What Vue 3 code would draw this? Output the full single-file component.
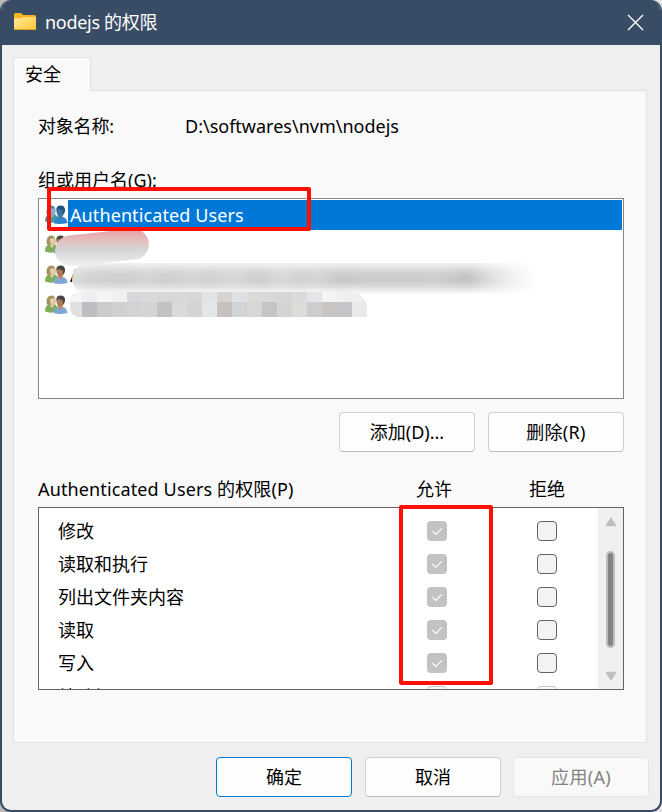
<script setup>
const users = [
  { name: 'Authenticated Users', selected: true },
  { name: '', selected: false },
  { name: 'A', selected: false },
  { name: '', selected: false },
]

const permissions = ['修改', '读取和执行', '列出文件夹内容', '读取', '写入', '特殊权限'].map(
  (label, i) => ({ label, empty: i === 5 }),
)

const mosaic = [
  ['#f4f4f5', '#eeeef2', '#f4f4f6', '#f0f0f0', '#d8d8dc', '#d8d9da', '#d6d7d7', '#d8d8d8', '#d8d7d6', '#e1e4e6', '#d6d3d0', '#dfe1e4', '#dadbd8', '#d7d8d9', '#d5d6d6', '#dadad8', '#e3e5e9', '#f4f4f4', '#efefef', '#eeefef'],
  ['#dfdfdf', '#bdbec2', '#cbcbc9', '#cfd0d2', '#d3d3d3', '#d4d4d2', '#c1c2c2', '#d9dadd', '#d5d4d2', '#e3e7ea', '#c6c1be', '#d1d3d5', '#d6d8d7', '#c4c5c7', '#d3d4d4', '#dddcd8', '#cccdcf', '#c8c5c3', '#c5c6c9', '#e9eaea'],
]
</script>

<template>
  <div class="window">
    <header class="titlebar">
      <svg class="folder" width="22" height="18" viewBox="0 0 22 18">
        <defs>
          <linearGradient id="folderFill" x1="0" y1="0" x2="1" y2="1">
            <stop offset="0" stop-color="#ffe69b" />
            <stop offset="1" stop-color="#ffc937" />
          </linearGradient>
        </defs>
        <path d="M0 1.5Q0 0 1.5 0H6.5Q7.3 0 8 .9L9.2 2H20.5Q22 2 22 3.5V8H0Z" fill="#f8b51c" />
        <path d="M0 5.2H6.5Q7.5 5.2 8.2 4.4L8.8 4H20.7Q22 4 22 5.2V16Q22 17 21 17H1Q0 17 0 16Z" fill="url(#folderFill)" />
        <path d="M.3 16.5H21.7" stroke="#e5a321" />
      </svg>
      <h1>nodejs 的权限</h1>
      <svg class="close" width="17" height="17" viewBox="0 0 17 17">
        <path d="M1 1L16 16M16 1L1 16" stroke="#fff" stroke-width="1.4" />
      </svg>
    </header>

    <main class="body">
      <div class="tab">安全</div>
      <section class="panel">
        <div class="object">
          <span class="object-label">对象名称:</span>
          <span class="path">D:\softwares\nvm\nodejs</span>
        </div>
        <div class="group-label">组或用户名(G):</div>

        <div class="users">
          <div v-for="(user, i) in users" :key="i" class="user" :class="{ selected: user.selected }">
            <svg class="people" width="23" height="22" viewBox="0 0 23 22">
              <path d="M0 17.5Q0 11.5 4 10.5L9 9.5L13 13L10.5 18Q5 19.5 0 17.5Z" :fill="user.selected ? '#429a98' : '#80ad5a'" />
              <path d="M4.5 10L7 14L9.5 10Z" :fill="user.selected ? '#8ab4cc' : '#ecd9c2'" />
              <path d="M1.5 9.5Q1 1.5 6.5 1.5Q11 1.5 10.5 9L8 10.5L3 11Z" :fill="user.selected ? '#4391ad' : '#a3945c'" />
              <path d="M5 5Q8 3.5 10 5V8Q9.5 10.5 7.8 10.5Q5 10 5 7Z" :fill="user.selected ? '#84b1cc' : '#e8cbaa'" />
              <path d="M9 19.5Q8.5 14 13 13H18Q22 14 22.5 19Q16 20.5 9 19.5Z" :fill="user.selected ? '#2c86cf' : '#7da8d8'" />
              <path d="M13.5 11H17.5V13.5L15.5 16L12.8 12.8Z" :fill="user.selected ? '#4577a6' : '#c28c62'" />
              <ellipse cx="15.4" cy="7.8" rx="3.9" ry="4.8" :fill="user.selected ? '#3a729f' : '#b07b54'" />
              <path d="M11.3 6Q11.3 1.5 15.5 1.5Q20.5 1.5 20 7Q19.5 10 18 10.5L17.7 6.3Q15 6 13.5 4.5L11.7 7Z" :fill="user.selected ? '#20517f' : '#4b4541'" />
            </svg>
            <span class="user-name">{{ user.name }}</span>
          </div>

          <div class="smudge smudge-red"></div>
          <div class="smudge smudge-long"><div class="smudge-core"></div></div>
          <div class="mosaic">
            <div v-for="(line, r) in mosaic" :key="r" class="mosaic-line">
              <i v-for="(color, c) in line" :key="c" :style="{ background: color }"></i>
            </div>
          </div>
          <div class="mark mark-user"></div>
        </div>

        <div class="actions">
          <button>添加(D)...</button>
          <button class="loose">删除(R)</button>
        </div>

        <div class="perm-head">
          <span class="perm-title">Authenticated Users 的权限(P)</span>
          <span class="allow">允许</span>
          <span class="deny">拒绝</span>
        </div>

        <div class="perms">
          <div class="perm-rows">
            <div v-for="perm in permissions" :key="perm.label" class="perm">
              <span class="perm-name" :class="{ low: perm.empty }">{{ perm.label }}</span>
              <span class="box" :class="perm.empty ? 'faded' : 'checked'">
                <svg v-if="!perm.empty" width="20" height="20" viewBox="0 0 20 20">
                  <path d="M5.3 10.2L8.7 13.4L14.8 7.3" fill="none" stroke="#fff" stroke-width="1.1" />
                </svg>
              </span>
              <span class="box deny-box" :class="{ faded: perm.empty }"></span>
            </div>
          </div>
          <div class="scrollbar">
            <svg width="12" height="10" viewBox="0 0 12 10">
              <path d="M6 1.5L10.5 8.5H1.5Z" fill="#bfbfbf" stroke="#bfbfbf" stroke-width="1.5" stroke-linejoin="round" />
            </svg>
            <div class="thumb"></div>
            <svg width="12" height="10" viewBox="0 0 12 10">
              <path d="M6 8.5L10.5 1.5H1.5Z" fill="#bfbfbf" stroke="#bfbfbf" stroke-width="1.5" stroke-linejoin="round" />
            </svg>
          </div>
          <div class="mark mark-allow"></div>
        </div>
      </section>

      <footer class="footer">
        <button class="primary">确定</button>
        <button>取消</button>
        <button class="disabled loose" disabled>应用(A)</button>
      </footer>
    </main>
  </div>
</template>

<style>
body {
  margin: 0;
  background: linear-gradient(90deg, #b9b9b9 0, #e6e6e6 100%);
}
</style>

<style scoped>
* {
  box-sizing: border-box;
}
.window {
  width: 662px;
  height: 812px;
  border: 2px solid #394c65;
  border-top: 0;
  border-radius: 11px;
  overflow: hidden;
  background: #efefef;
  color: #000;
  font: 18px/24px 'Noto Sans', 'Noto Sans CJK SC', sans-serif;
  white-space: nowrap;
}
.titlebar {
  height: 45px;
  background: #394c65;
  display: flex;
  align-items: center;
  padding: 0 16px 0 12px;
  color: #fff;
}
.folder {
  margin-top: -1px;
}
h1 {
  margin: -1px auto 0 9px;
  font-size: 18px;
  font-weight: 400;
  letter-spacing: -0.3px;
}
.body {
  padding: 12px 13px 0 11px;
}
.tab {
  position: relative;
  width: 78px;
  height: 34px;
  margin-bottom: -1px;
  padding: 4px 0 0 11px;
  background: #f9f9f9;
  border: 1px solid #e2e2e2;
  border-bottom: 0;
}
.panel {
  height: 653px;
  width: 634px;
  background: #f9f9f9;
  border: 1px solid #e2e2e2;
  padding: 23px 22px 0 24px;
}
.object {
  display: flex;
  height: 54px;
}
.object-label {
  width: 147px;
  letter-spacing: -0.2px;
}
.group-label {
  height: 30px;
}
.users {
  position: relative;
  width: 586px;
  height: 201px;
  background: #fff;
  border: 1px solid #828790;
  padding: 1px;
}
.user {
  height: 30px;
  display: flex;
  align-items: center;
  padding-left: 5px;
}
.people {
  margin-top: -1px;
}
.user-name {
  flex: 1;
  height: 30px;
  line-height: 30px;
  padding-left: 2px;
  letter-spacing: 0.1px;
}
.selected .user-name {
  background: #0078d7;
  color: #fff;
}
.smudge {
  position: absolute;
}
.smudge-red {
  left: 16px;
  top: 33px;
  width: 94px;
  height: 31px;
  border-radius: 16px;
  transform: rotate(-6deg);
  background: linear-gradient(186deg, #eba3a8 8%, #e5bdbd 32%, #d5d5d5 55%, #e5e5e5 80%, #f6f6f6);
}
.smudge-long {
  left: 33px;
  top: 64px;
  width: 466px;
  height: 31px;
  border-radius: 16px;
  overflow: hidden;
  background: linear-gradient(180deg, #f4f4f4, #dfdfdf 35%, #dadada 60%, #f2f2f2 88%, #fdfdfd);
  mask-image: linear-gradient(90deg, #000 85%, transparent);
}
.smudge-core {
  height: 12px;
  margin: 9px 12px;
  filter: blur(6px);
  background: linear-gradient(90deg, #cecece, #c9c9c9 10%, #d4d4d4 14%, #c8c8c8 18%, #d3d2d0 24%, #cbccd0 29%, #d8d8d6 34%, #c5c5c7 40%, #dadbdc 44%, #c9cbcb 49%, #d5d4d3 53%, #c0bfbe 58%, #c9c8c7 66%, #c2c4c8 74%, #cacaca 80%, #b9b8b8 87%, #cdcdcd 93%, #dcdfe2);
}
.mosaic {
  position: absolute;
  left: 31px;
  top: 93px;
  width: 297px;
  height: 25px;
  border-radius: 9px 16px 0 9px;
  overflow: hidden;
}
.mosaic-line {
  display: flex;
  margin-left: -3px;
  height: 10px;
}
.mosaic-line + .mosaic-line {
  height: 15px;
}
.mosaic-line i {
  flex: 0 0 15px;
}
.mark {
  position: absolute;
  border: 4px solid #ff1000;
  border-radius: 2px;
}
.mark-user {
  left: 8px;
  top: -12px;
  width: 264px;
  height: 44px;
}
.actions {
  display: flex;
  gap: 13px;
  justify-content: flex-end;
  padding-top: 13px;
}
button {
  width: 136px;
  height: 40px;
  margin: 0;
  padding: 0;
  font: inherit;
  color: #000;
  background: #fdfdfd;
  border: 1px solid #d0d0d0;
  border-bottom-color: #bababa;
  border-radius: 4px;
}
.loose {
  letter-spacing: 0.3px;
}
.primary {
  border-color: #0078d4;
}
.disabled {
  color: #838383;
  background: #f9f9f9;
  border-color: #e6e6e6;
  margin-left: -1px;
}
.perm-head {
  display: flex;
  height: 30px;
  margin-top: 25px;
}
.perm-title {
  width: 378px;
  letter-spacing: 0.13px;
}
.allow {
  width: 113px;
}
.perms {
  position: relative;
  display: flex;
  width: 586px;
  height: 183px;
  background: #fff;
  border: 1px solid #646464;
}
.perm-rows {
  flex: 1;
  overflow: hidden;
  padding: 6px 0 0 19px;
}
.perm {
  height: 33px;
  display: flex;
  align-items: center;
}
.perm-name {
  width: 369px;
}
.low {
  padding-top: 2px;
}
.box {
  width: 20px;
  height: 20px;
  border-radius: 4px;
  border: 1px solid #636363;
  background: #f3f3f3;
}
.box svg {
  display: block;
}
.checked {
  border: 0;
  background: #c3c3c3;
}
.deny-box {
  margin-left: 90px;
}
.faded {
  border-color: #c3c3c3;
  background: #fbfbfb;
}
.scrollbar {
  width: 25px;
  background: #f0f0f0;
  display: flex;
  flex-direction: column;
  align-items: center;
  justify-content: space-between;
  padding: 9px 0 8px;
}
.thumb {
  width: 9px;
  height: 97px;
  border: 2px solid #bdbdbd;
  border-radius: 5px;
  background: #858585;
}
.mark-allow {
  left: 360px;
  top: -3px;
  width: 94px;
  height: 180px;
}
.footer {
  display: flex;
  justify-content: flex-end;
  gap: 13px;
  padding-top: 14px;
  margin-right: -2px;
}
</style>
